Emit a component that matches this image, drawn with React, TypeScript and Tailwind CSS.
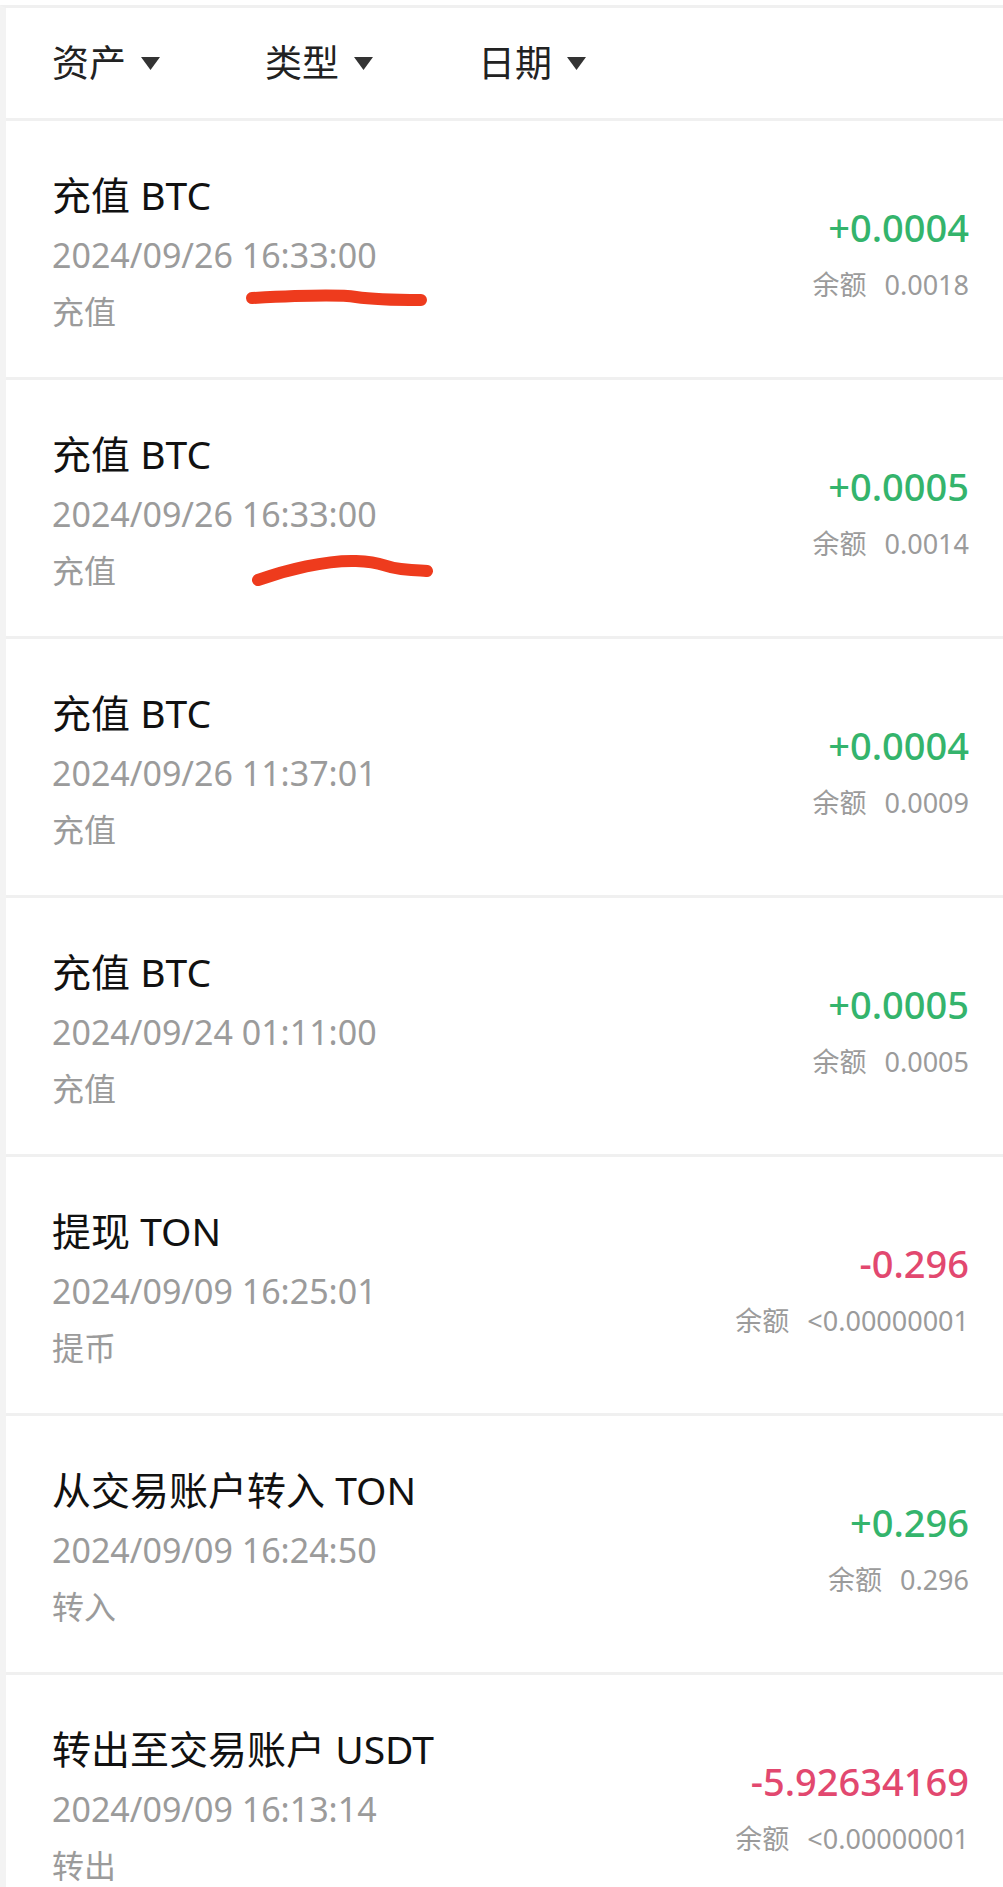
const records = [
  { title: "充值 BTC", time: "2024/09/26 16:33:00", kind: "充值", amount: "+0.0004", balance: "0.0018", up: true },
  { title: "充值 BTC", time: "2024/09/26 16:33:00", kind: "充值", amount: "+0.0005", balance: "0.0014", up: true },
  { title: "充值 BTC", time: "2024/09/26 11:37:01", kind: "充值", amount: "+0.0004", balance: "0.0009", up: true },
  { title: "充值 BTC", time: "2024/09/24 01:11:00", kind: "充值", amount: "+0.0005", balance: "0.0005", up: true },
  { title: "提现 TON", time: "2024/09/09 16:25:01", kind: "提币", amount: "-0.296", balance: "<0.00000001", up: false },
  { title: "从交易账户转入 TON", time: "2024/09/09 16:24:50", kind: "转入", amount: "+0.296", balance: "0.296", up: true },
  { title: "转出至交易账户 USDT", time: "2024/09/09 16:13:14", kind: "转出", amount: "-5.92634169", balance: "<0.00000001", up: false },
];

// hand-drawn red marks over the first two rows
const marks: Record<number, string> = {
  0: "M246 177 C 285 175, 330 173, 350 176 S 400 179, 415 179",
  1: "M252 200 C 280 190, 320 180, 350 181 S 375 187, 395 189 S 415 190, 421 191",
};

function Caret() {
  return (
    <svg width="19" height="13" viewBox="0 0 19 13" className="shrink-0">
      <polygon points="0,0 19,0 9.5,13" fill="#333333" />
    </svg>
  );
}

export default function App() {
  const filters = ["资产", "类型", "日期"];

  return (
    <div
      className="w-[1003px] h-[1887px] overflow-hidden bg-white pt-[5px]"
      style={{ fontFamily: '"Noto Sans", "Noto Sans CJK SC", sans-serif' }}
    >
      <div className="h-full border-t-[3px] border-l-[6px] border-t-[#f0f0f0] border-l-[#f3f3f3]">
        {/* filter bar */}
        <div className="h-[113px] flex items-center pl-[46px] border-b-[3px] border-[#f0f0f0]">
          {filters.map((f) => (
            <div key={f} className="w-[213px] flex items-center gap-[15px]">
              <span className="text-[37px] leading-[44px] text-[#222222]">{f}</span>
              <Caret />
            </div>
          ))}
        </div>

        {records.map((r, i) => (
          <div
            key={i}
            className="relative h-[259px] flex justify-between pl-[46px] pr-[34px] border-b-[3px] border-[#f0f0f0]"
          >
            <div className="flex flex-col pt-[52px]">
              <div className="text-[39px] leading-[44px] text-[#111111] whitespace-nowrap">{r.title}</div>
              <div className="mt-[16px] text-[34px] leading-[44px] text-[#9b9b9b] whitespace-nowrap">{r.time}</div>
              <div className="mt-[13px] text-[32px] leading-[44px] text-[#9b9b9b]">{r.kind}</div>
            </div>
            <div className="flex flex-col items-end pt-[82px]">
              <div
                className={
                  r.up
                    ? "text-[38px] leading-[48px] font-medium text-[#34b46c]"
                    : "text-[38px] leading-[48px] font-medium text-[#e2486f]"
                }
              >
                {r.amount}
              </div>
              <div className="mt-[16px] flex items-center gap-[18px] text-[27px] leading-[36px] text-[#9b9b9b]">
                <span>余额</span>
                <span>{r.balance}</span>
              </div>
            </div>
            {marks[i] && (
              <svg className="absolute inset-0 w-full h-full pointer-events-none">
                <path d={marks[i]} fill="none" stroke="#ee3b1d" strokeWidth="12" strokeLinecap="round" />
              </svg>
            )}
          </div>
        ))}
      </div>
    </div>
  );
}
